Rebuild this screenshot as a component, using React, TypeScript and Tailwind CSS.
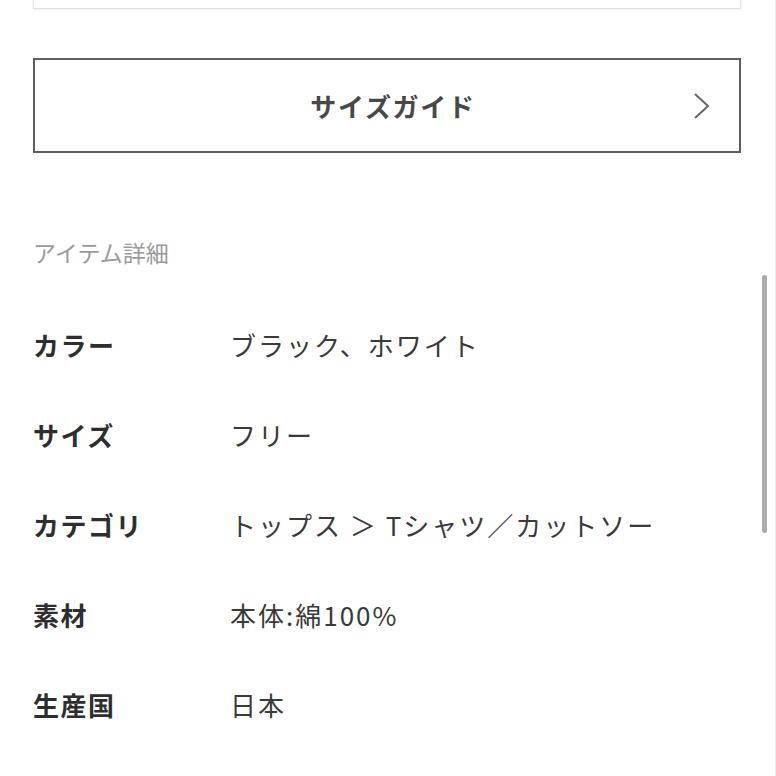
const ROWS = [
  { label: "カラー", value: "ブラック、ホワイト" },
  { label: "サイズ", value: "フリー" },
  { label: "カテゴリ", value: "トップス ＞ Tシャツ／カットソー" },
  { label: "素材", value: "本体:綿100%" },
  { label: "生産国", value: "日本" },
];

export default function App() {
  return (
    <div
      className="relative h-[776px] w-[776px] overflow-hidden bg-white text-[#333]"
      style={{ fontFamily: '"Noto Sans CJK JP", "Noto Sans", sans-serif' }}
    >
      <div className="pl-[33px] pr-[35px]">
        {/* tail of the card above */}
        <div className="h-[9px] border-x border-b border-[#e2e2e2] shadow-[0_1px_2px_rgba(0,0,0,0.06)]" />

        <button className="relative mt-[49px] flex h-[95px] w-full items-center justify-center border-2 border-[#5e5e5e] bg-white">
          <span className="pl-[12px] text-[26px] font-bold tracking-[1.7px] text-[#484848]">サイズガイド</span>
          <svg
            className="absolute right-[28px] top-1/2 -translate-y-1/2"
            width="18"
            height="28"
            viewBox="0 0 18 28"
            fill="none"
          >
            <polyline points="2,2 15,14 2,26" stroke="#666" strokeWidth="2" />
          </svg>
        </button>

        <h3 className="mt-[83px] text-[23px] leading-[32px] text-[#9a9a9a]">アイテム詳細</h3>

        <dl className="mt-[31px]">
          {ROWS.map((r) => (
            <div key={r.label} className="flex h-[90px] items-center">
              <dt className="w-[197px] text-[26px] font-bold tracking-[1.5px] text-[#2e2e2e]">{r.label}</dt>
              <dd className="text-[26px] tracking-[2px] text-[#3a3a3a]">{r.value}</dd>
            </div>
          ))}
        </dl>
      </div>

      {/* scrollbar */}
      <div className="absolute left-[762px] top-[275px] h-[258px] w-[5px] rounded-full bg-[#ababab]" />
      <div className="absolute right-0 top-0 h-full w-px bg-[#ececec]" />
    </div>
  );
}
